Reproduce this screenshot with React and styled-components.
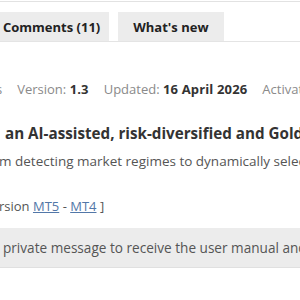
import React from "react";
import styled, { createGlobalStyle } from "styled-components";

const Global = createGlobalStyle`
  html, body { margin: 0; padding: 0; background: #fff; }
  body { width: 300px; height: 300px; overflow: hidden; font-family: "Open Sans", "Liberation Sans", sans-serif; }
`;

const Page = styled.div`
  width: 300px;
  height: 300px;
  overflow: hidden;
  border-top: 1px solid #e2e2e2;
  margin-top: 1px;
  box-sizing: border-box;
`;

const TabBar = styled.div`
  display: flex;
  gap: 9px;
  margin-top: 10px;
  margin-left: -14px;
  border-bottom: 1px solid #e4e4e4;
  width: 340px;
`;

const Tab = styled.div`
  background: #ececec;
  height: 29px;
  padding: 0 ${(p) => (p.$first ? 9 : 15)}px 0 ${(p) => (p.$first ? 17 : 15)}px;
  display: flex;
  align-items: center;
  font-size: 13px;
  font-weight: 700;
  color: #222;
  white-space: nowrap;
`;

const Body = styled.div`
  padding-top: 37px;
  white-space: nowrap;
`;

const Meta = styled.div`
  font-size: 13px;
  color: #8a8a8a;
  display: flex;
  gap: 15px;
  margin-left: -4px;
  height: 20px;
  align-items: center;
`;

const Val = styled.b`
  color: #333;
  font-weight: 700;
  letter-spacing: 0.15px;
`;

const Title = styled.h1`
  margin: 24px 0 0 5px;
  font-size: 15.2px;
  font-weight: 700;
  color: #333;
  line-height: 20px;
`;

const Desc = styled.p`
  margin: 9px 0 0 -1px;
  font-size: 13.5px;
  color: #555;
  line-height: 18px;
`;

const Links = styled.p`
  margin: 27px 0 0 -1px;
  font-size: 13px;
  color: #555;
  line-height: 18px;
`;

const A = styled.a`
  color: #5277a8;
  text-decoration: underline;
`;

const Note = styled.div`
  margin-top: 13px;
  background: #ececec;
  height: 39px;
  display: flex;
  align-items: center;
  padding-left: 3px;
  font-size: 13.6px;
  color: #555;
  border-bottom: 1px solid #e0e0e0;
`;

export default function App() {
  return (
    <>
      <Global />
      <Page>
        <TabBar>
          <Tab $first>Comments (11)</Tab>
          <Tab>What's new</Tab>
        </TabBar>
        <Body>
          <Meta>
            <span>s</span>
            <span>Version: <Val>1.3</Val></span>
            <span>Updated: <Val>16 April 2026</Val></span>
            <span>Activations: <Val>5</Val></span>
          </Meta>
          <Title>an AI-assisted, risk-diversified and Gold-focused</Title>
          <Desc>m detecting market regimes to dynamically select strategies</Desc>
          <Links>rsion <A href="#">MT5</A> - <A href="#">MT4</A> ]</Links>
          <Note>private message to receive the user manual and settings</Note>
        </Body>
      </Page>
    </>
  );
}
